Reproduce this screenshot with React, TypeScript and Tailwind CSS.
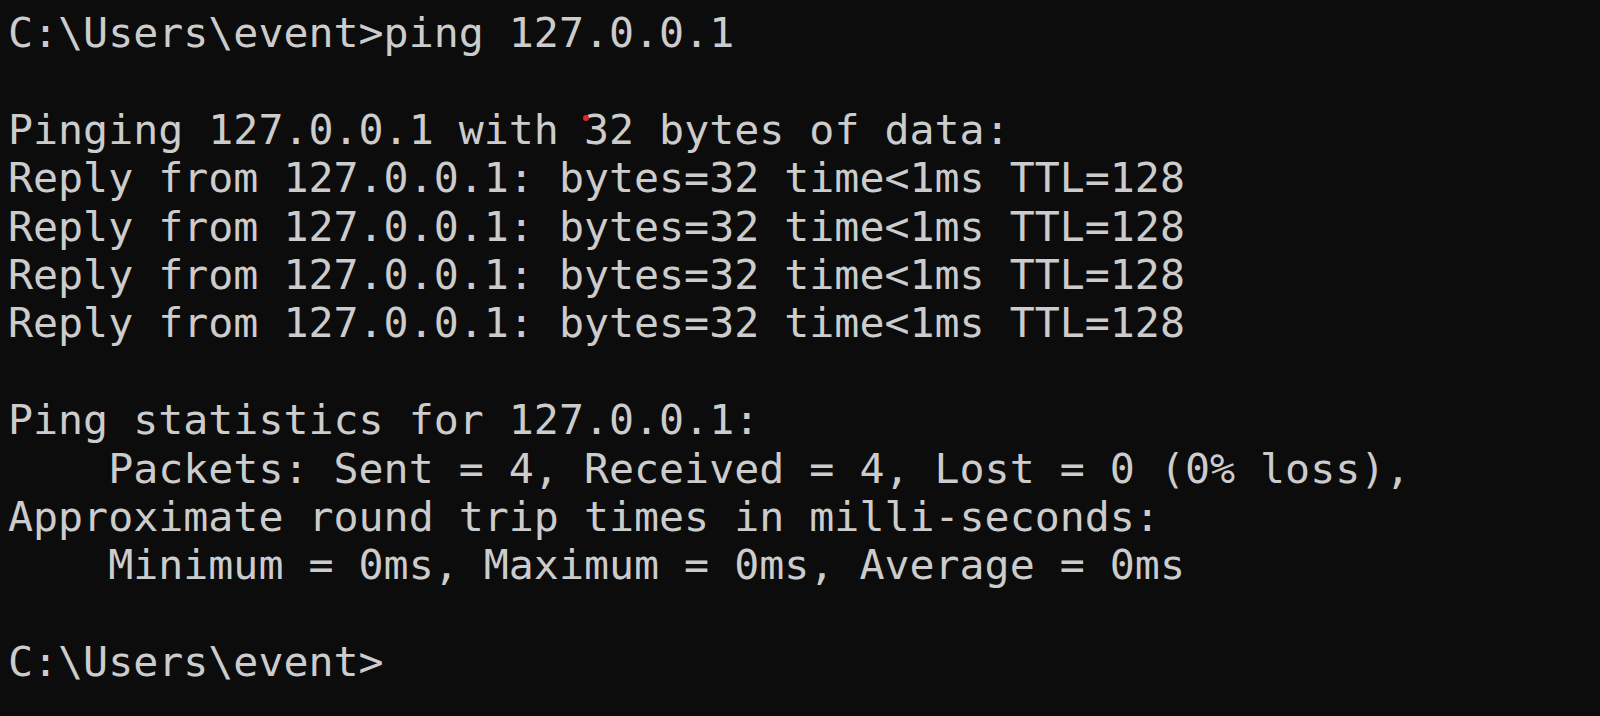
const lines = [
  "C:\\Users\\event>ping 127.0.0.1",
  "",
  "PINGLINE",
  "Reply from 127.0.0.1: bytes=32 time<1ms TTL=128",
  "Reply from 127.0.0.1: bytes=32 time<1ms TTL=128",
  "Reply from 127.0.0.1: bytes=32 time<1ms TTL=128",
  "Reply from 127.0.0.1: bytes=32 time<1ms TTL=128",
  "",
  "Ping statistics for 127.0.0.1:",
  "    Packets: Sent = 4, Received = 4, Lost = 0 (0% loss),",
  "Approximate round trip times in milli-seconds:",
  "    Minimum = 0ms, Maximum = 0ms, Average = 0ms",
  "",
  "C:\\Users\\event>",
]

const App = () => {
  return (
    <main className="w-full h-[716px] overflow-hidden bg-[#0c0c0c] text-[#cccccc] pl-[8px] pt-[9px] font-['DejaVu_Sans_Mono','Liberation_Mono',monospace] text-[41.6px] leading-[48.4px]">
      {lines.map((line, i) =>
        line === "PINGLINE" ? (
          <div key={i} className="whitespace-pre h-[48.4px]">
            Pinging 127.0.0.1 with{" "}
            <span className="relative">
              <span className="absolute left-[-1px] top-[10px] w-[6px] h-[6px] rounded-full bg-[#e3261f]" />
              32
            </span>{" "}
            bytes of data:
          </div>
        ) : (
          <div key={i} className="whitespace-pre h-[48.4px]">
            {line}
          </div>
        )
      )}
    </main>
  )
}

export default App
